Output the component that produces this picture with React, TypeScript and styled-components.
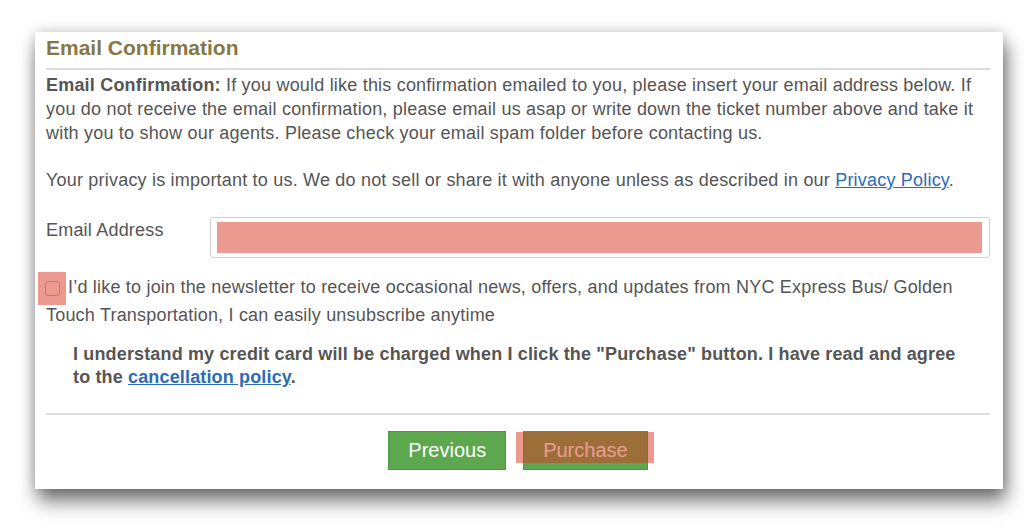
import styled, { createGlobalStyle } from 'styled-components'

const GlobalStyle = createGlobalStyle`
  html, body {
    margin: 0;
    padding: 0;
    background: #fff;
  }
  body {
    font-family: 'Liberation Sans', Arial, Helvetica, sans-serif;
    color: #555;
  }
`

// annotation tint laid over the marked fields
const MARK = 'rgba(217, 53, 31, 0.5)'

export default function App() {
  return (
    <>
      <GlobalStyle />
      <Page>
        <Card>
          <Heading>Email Confirmation</Heading>

          <Text>
            <strong>Email Confirmation:</strong> If you would like this confirmation emailed to you, please
            insert your email address below. If you do not receive the email confirmation, please email us
            asap or write down the ticket number above and take it with you to show our agents. Please check
            your email spam folder before contacting us.
          </Text>

          <Text $gap={23}>
            Your privacy is important to us. We do not sell or share it with anyone unless as described in
            our <Link href="#">Privacy Policy</Link>.
          </Text>

          <FieldRow>
            <FieldLabel htmlFor="email">Email Address</FieldLabel>
            <InputBox>
              <EmailInput id="email" type="email" />
            </InputBox>
          </FieldRow>

          <Newsletter>
            <CheckMark>
              <Check type="checkbox" />
            </CheckMark>
            I’d like to join the newsletter to receive occasional news, offers, and updates from NYC Express
            Bus/ Golden Touch Transportation, I can easily unsubscribe anytime
          </Newsletter>

          <Agreement>
            I understand my credit card will be charged when I click the "Purchase" button. I have read and
            agree to the <Link href="#">cancellation policy</Link>.
          </Agreement>

          <Divider />

          <Actions>
            <Button type="button">Previous</Button>
            <Button type="button" $marked>
              Purchase
            </Button>
          </Actions>
        </Card>
      </Page>
    </>
  )
}

const Page = styled.div`
  height: 529px;
  padding-top: 32px;
  box-sizing: border-box;
  overflow: hidden;
`

const Card = styled.section`
  width: 968px;
  margin-left: 35px;
  box-sizing: border-box;
  padding: 4px 13px 19px 11px;
  background: #fff;
  box-shadow: 3px 12px 18px rgba(0, 0, 0, 0.55), 0 0 12px rgba(0, 0, 0, 0.18);
  letter-spacing: 0.2px;
`

const Heading = styled.h2`
  margin: 0;
  padding-bottom: 8px;
  border-bottom: 2px solid #dcdcdc;
  font-size: 21px;
  line-height: 24px;
  font-weight: 700;
  letter-spacing: 0;
  color: #857846;
`

const Text = styled.p<{ $gap?: number }>`
  margin: ${(p) => p.$gap ?? 3}px 0 0;
  font-size: 18px;
  line-height: 24px;

  strong {
    font-weight: 700;
  }
`

const Link = styled.a`
  color: #2c6bb6;
  text-decoration: underline;
`

const FieldRow = styled.div`
  display: flex;
  align-items: flex-start;
  margin-top: 25px;
`

const FieldLabel = styled.label`
  width: 164px;
  flex: none;
  padding-top: 1px;
  font-size: 18px;
  line-height: 24px;
`

const InputBox = styled.div`
  flex: 1;
  height: 41px;
  box-sizing: border-box;
  padding: 4px 7px 4px 6px;
  border: 1px solid #cfcfcf;
  border-radius: 3px;
`

const EmailInput = styled.input`
  display: block;
  width: 100%;
  height: 31px;
  box-sizing: border-box;
  border: 0;
  padding: 0 8px;
  background: ${MARK};
  font: inherit;
  outline: none;
`

const Newsletter = styled.p`
  margin: 16px 0 0;
  font-size: 18px;
  line-height: 27px;
`

const CheckMark = styled.span`
  display: inline-flex;
  align-items: center;
  justify-content: center;
  width: 28px;
  height: 33px;
  margin: -3px 2px -3px -8px;
  vertical-align: middle;
  background: ${MARK};
`

const Check = styled.input`
  appearance: none;
  width: 15px;
  height: 15px;
  margin: 0;
  border: 1px solid rgba(120, 60, 50, 0.35);
  border-radius: 3px;
  background: transparent;
`

const Agreement = styled.p`
  margin: 14px 0 0;
  padding: 0 20px 0 27px;
  font-size: 18px;
  line-height: 23px;
  font-weight: 700;
  letter-spacing: 0.15px;
`

const Divider = styled.hr`
  margin: 24px 0 0;
  border: 0;
  border-top: 2px solid #dcdcdc;
`

const Actions = styled.div`
  display: flex;
  justify-content: center;
  gap: 17px;
  margin-top: 16px;
`

const Button = styled.button<{ $marked?: boolean }>`
  position: relative;
  height: 39px;
  padding: 0 19px;
  border: 1px solid #4c9a43;
  background: #5da84f;
  color: #fff;
  font-family: 'Liberation Sans', Arial, sans-serif;
  font-size: 20px;
  cursor: pointer;

  &::after {
    content: '';
    display: ${(p) => (p.$marked ? 'block' : 'none')};
    position: absolute;
    left: -8px;
    right: -7px;
    top: 0;
    bottom: 6px;
    background: ${MARK};
  }
`
